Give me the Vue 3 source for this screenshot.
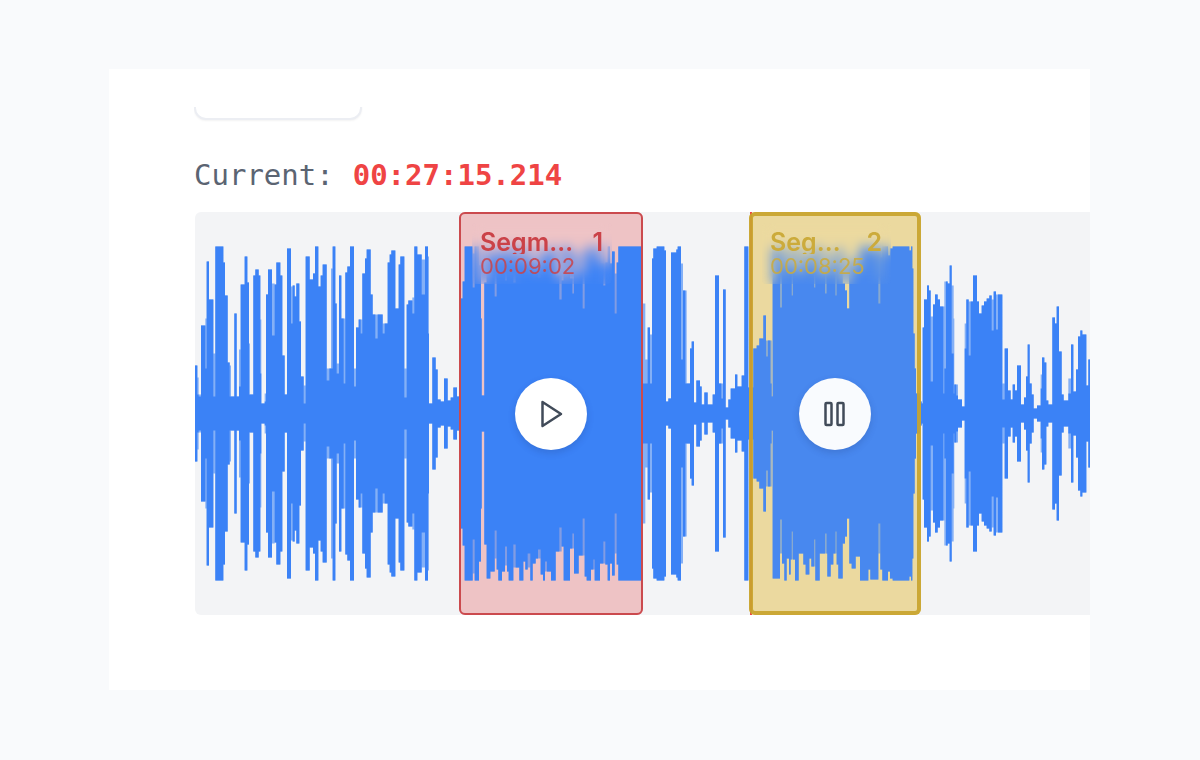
<script setup>
// Waveform units: three per pixel across, one per pixel of amplitude.
const WIDTH = 2685
const HEIGHT = 403
const MIDDLE = HEIGHT / 2

// Each block holds [x, amplitude, softAmplitude?] steps; a step runs to the next one.
const blocks = [
  { origin: -15, steps: [
    [15, 48], [22, 19, 36], [26, 17, 19], [33, 88], [46, 45, 95], [50, 152], [57, 114], [70, 17, 60], [76, 167], [100, 151],
    [105, 118], [113, 51], [119, 17, 48], [123, 17], [133, 100], [140, 17], [147, 27, 64], [152, 129], [164, 157],
    [172, 131], [177, 19, 70], [180, 19], [190, 138], [196, 144], [206, 138], [211, 40, 94], [214, 10], [224, 12, 20],
    [228, 119], [234, 144], [246, 78, 130], [254, 129], [259, 151], [271, 138], [277, 58], [284, 19], [291, 165],
    [303, 90, 127], [308, 128], [314, 117], [319, 130], [328, 92], [333, 37], [341, 10, 28], [347, 157], [359, 134],
    [369, 140], [375, 167], [385, 127], [392, 138]
  ] },
  { origin: 375, steps: [
    [8, 149], [20, 33, 45], [28, 45], [33, 45, 145], [38, 167], [46, 110], [50, 40, 50], [57, 138], [64, 95], [71, 30, 95], [76, 141],
    [82, 147], [90, 167], [102, 27, 45], [108, 86], [116, 94], [122, 80, 94], [127, 140], [135, 155], [140, 164], [152, 119],
    [158, 99], [166, 75, 99], [173, 99], [188, 80, 90], [194, 90], [203, 151], [209, 159], [214, 163], [226, 105],
    [236, 149], [241, 157], [253, 16, 45], [260, 109], [265, 113], [277, 100, 116], [283, 167], [292, 159],
    [305, 119, 154], [315, 167], [324, 80, 157], [327, 10], [337, 56], [347, 44], [353, 14], [362, 12], [372, 35], [383, 13],
    [392, 16], [400, 26], [411, 17]
  ] },
  { origin: 765, steps: [
    [32, 115], [38, 132], [44, 167], [68, 126, 160], [74, 167], [87, 148], [93, 95], [95, 18], [103, 131],
    [110, 165], [121, 158], [134, 117, 145], [140, 156], [145, 167], [156, 158], [165, 133, 152], [171, 158], [176, 167],
    [190, 131, 154], [197, 154], [208, 167], [220, 148], [226, 156], [233, 140, 154], [241, 167], [248, 150], [257, 145],
    [264, 136, 145], [272, 161], [279, 167], [285, 148, 158], [291, 158], [303, 167], [317, 138], [328, 114, 138], [335, 133],
    [341, 167], [360, 135], [367, 120, 135], [372, 160], [386, 142], [398, 105, 142], [404, 163], [410, 167], [423, 156],
    [430, 146, 156], [434, 167], [450, 150], [460, 128, 150], [466, 151], [473, 167], [480, 150], [486, 162], [494, 100, 140],
    [500, 151], [505, 167]
  ] },
  { origin: 1320, steps: [
    [22, 30, 110], [31, 30, 54], [38, 86], [45, 30, 79], [51, 155], [55, 165], [65, 167], [88, 163], [93, 12], [100, 15],
    [108, 161], [124, 164], [128, 167], [138, 54, 150], [144, 123], [151, 30, 123], [155, 30], [165, 65], [170, 72],
    [177, 11], [184, 33], [195, 27], [200, 9], [208, 21], [218, 9], [233, 19], [240, 138], [252, 30], [259, 15, 30],
    [264, 124], [272, 6], [280, 14], [287, 25], [300, 39], [307, 27], [320, 38], [328, 167]
  ] },
  { origin: 1635, steps: [
    [25, 26], [40, 65], [50, 68], [58, 75], [70, 98], [78, 57, 73], [84, 73], [91, 30, 73], [95, 17], [98, 165], [120, 106, 140],
    [126, 150], [133, 167], [140, 145], [147, 161], [152, 146], [155, 118, 146], [159, 146], [165, 167], [176, 140],
    [190, 151], [197, 161], [208, 145], [214, 153], [222, 126, 153], [226, 167], [239, 140], [255, 120, 140], [260, 140],
    [262, 163], [272, 151], [280, 140], [286, 118, 140], [290, 151], [295, 165], [308, 130], [315, 123], [321, 105],
    [328, 150], [335, 155], [347, 143], [360, 167], [385, 156], [391, 166], [415, 110, 140], [421, 156], [427, 167],
    [444, 158], [450, 165], [458, 167], [508, 163], [513, 167], [517, 145], [520, 80], [524, 45], [528, 20],
    [540, 12]
  ] },
  { origin: 2160, steps: [
    [20, 10], [23, 86], [27, 114], [36, 128], [42, 123], [47, 32, 97], [54, 109], [60, 119], [68, 114], [75, 107],
    [85, 20, 107], [88, 45, 132], [93, 132], [98, 130], [104, 148], [110, 60, 128], [116, 20, 95], [118, 29], [124, 18, 29], [129, 14],
    [141, 7], [149, 65, 90], [154, 114], [161, 58, 112], [167, 112], [174, 138], [186, 112], [192, 100], [200, 108],
    [207, 112], [215, 115], [223, 118], [230, 83, 114], [236, 122], [243, 84, 119], [249, 119], [262, 14, 30],
    [269, 65], [279, 23], [287, 14], [293, 29], [300, 23], [306, 48], [318, 9], [327, 16], [333, 37], [338, 69],
    [344, 30], [350, 19], [356, 5], [366, 8], [377, 25, 39], [381, 56], [388, 51], [394, 13], [400, 9], [412, 96],
    [420, 90], [425, 107], [432, 62], [440, 19], [446, 13], [460, 20, 35], [468, 69], [475, 22], [483, 44], [489, 77],
    [496, 83], [502, 79], [514, 28], [520, 54]
  ] }
]

const steps = blocks.flatMap(({ origin, steps }) =>
  steps.map(([x, solid, soft = 0]) => ({ x: x + origin, solid, soft: Math.max(solid, soft) }))
)

const outline = (key) =>
  steps
    .map((step, i) => {
      const end = i + 1 < steps.length ? steps[i + 1].x : WIDTH
      return `M${step.x} ${MIDDLE - step[key]}H${end}V${MIDDLE + step[key]}H${step.x}Z`
    })
    .join('')

const softPath = outline('soft')
const solidPath = outline('solid')

const segments = [
  { id: 1, name: 'Segment', length: '00:09:02', start: 264, end: 448, tone: 'red', playing: false },
  { id: 2, name: 'Segment', length: '00:08:25', start: 554, end: 726, tone: 'gold', playing: true }
]
const place = (s) => ({
  left: `${(s.start * 300) / WIDTH}%`,
  width: `${((s.end - s.start) * 300) / WIDTH}%`
})
const playhead = { left: `${(555 * 300) / WIDTH}%` }
</script>

<template>
  <main class="page">
    <section class="card">
      <div class="toolbar"><button class="tool" type="button" aria-label="Tools"></button></div>
      <p class="current">
        <span>Current:</span>
        <strong>00:27:15.214</strong>
      </p>
      <div class="track">
        <div v-for="s in segments" :key="s.id" class="fill" :class="s.tone" :style="place(s)"></div>
        <svg class="wave" :viewBox="`0 0 ${WIDTH} ${HEIGHT}`" preserveAspectRatio="none" aria-hidden="true">
          <path class="soft" :d="softPath" />
          <path :d="solidPath" />
        </svg>
        <div class="playhead" :style="playhead"></div>
        <article v-for="s in segments" :key="s.id" class="segment" :class="s.tone" :style="place(s)">
          <div class="label">
            <div class="title">
              <span class="name">{{ s.name }}</span>
              <span>{{ s.id }}</span>
            </div>
            <div class="length">{{ s.length }}</div>
          </div>
          <button class="toggle" type="button" :aria-label="s.playing ? 'Pause' : 'Play'">
            <svg v-if="s.playing" viewBox="0 0 32 32" width="32" height="32">
              <rect x="6.5" y="5" width="6" height="22" rx="1" />
              <rect x="18.5" y="5" width="6" height="22" rx="1" />
            </svg>
            <svg v-else viewBox="0 0 32 32" width="32" height="32">
              <path d="M7.5 4L26 16L7.5 28Z" />
            </svg>
          </button>
        </article>
      </div>
    </section>
  </main>
</template>

<style>
body {
  margin: 0;
  background: #f9fafc;
}
</style>

<style scoped>
.page {
  box-sizing: border-box;
  min-height: 100vh;
  padding: 69px 110px 70px 109px;
  display: grid;
}
.card {
  min-width: 0;
  padding: 38px 0 75px 85px;
  background: #fff;
}
.toolbar {
  height: 16px;
  overflow: hidden;
  display: flex;
  align-items: flex-end;
}
.tool {
  width: 168px;
  height: 60px;
  margin-bottom: 3px;
  flex: none;
  border: 2px solid #eceef3;
  border-radius: 12px;
  background: #fff;
  box-shadow: 0 1px 2px rgba(0, 0, 0, 0.05);
}
.current {
  margin: 32px 0 17px;
  display: flex;
  gap: 19px;
  font: 29px/40px "DejaVu Sans Mono", monospace;
  color: #5b6472;
}
.current strong {
  color: #ef4444;
}
.track {
  position: relative;
  height: 403px;
  margin-left: 1px;
  overflow: hidden;
  border-radius: 6px 0 0 6px;
  background: #f3f4f6;
}
.fill {
  position: absolute;
  top: 0;
  bottom: 0;
  border-radius: 6px;
}
.fill.red {
  background: #eec3c5;
}
.fill.gold {
  background: #ecda9f;
}
.wave {
  position: relative;
  display: block;
  width: 100%;
  height: 100%;
  fill: #3b82f6;
}
.soft {
  opacity: 0.6;
}
.playhead {
  position: absolute;
  top: 0;
  bottom: 0;
  width: 2px;
  background: #ef4444;
}
.segment {
  position: absolute;
  top: 0;
  bottom: 0;
  box-sizing: border-box;
  display: grid;
  place-items: center;
  border-radius: 6px;
  font-family: Inter, sans-serif;
}
.segment.red {
  border: 2px solid #cb4a4e;
  color: #cb4248;
}
.segment.gold {
  border: 4px solid rgba(200, 164, 46, 0.93);
  background: rgba(234, 217, 165, 0.08);
  color: #ccab3b;
}
.label {
  position: absolute;
  top: 9px;
  left: 11px;
  right: 29px;
  box-sizing: border-box;
  height: 61px;
  padding: 7px 9px 0 8px;
  backdrop-filter: blur(6px);
  border-radius: 4px;
}
.gold .label {
  top: 7px;
  left: 9px;
  right: 26px;
}
.title {
  display: flex;
  justify-content: space-between;
  gap: 14px;
  font-size: 25px;
  line-height: 24px;
  font-weight: 600;
}
.name {
  min-width: 0;
  overflow: hidden;
  text-overflow: ellipsis;
  white-space: nowrap;
}
.length {
  font-size: 22px;
  line-height: 24px;
  opacity: 0.85;
}
.toggle {
  width: 72px;
  height: 72px;
  padding: 0;
  display: grid;
  place-items: center;
  border: 0;
  border-radius: 50%;
  background: #fff;
  box-shadow: 0 3px 7px rgba(30, 50, 110, 0.2);
}
.gold .toggle {
  background: #f9fbfe;
}
.toggle svg {
  fill: none;
  stroke: #414b59;
  stroke-width: 2.5;
  stroke-linejoin: round;
}
</style>
